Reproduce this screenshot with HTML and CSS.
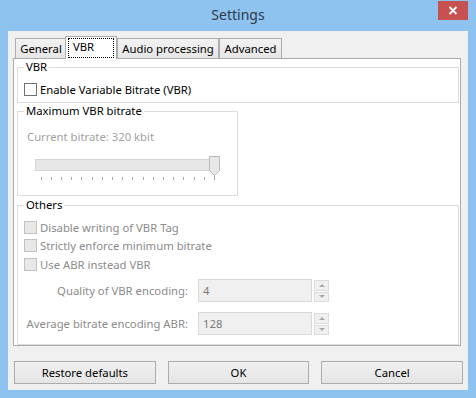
FILE: index.html
```html
<!DOCTYPE html>
<html>
<head>
<meta charset="utf-8">
<link rel="stylesheet" href="styles.css">
</head>
<body>
<div class="window">
  <div class="titlebar">
    <span class="title">Settings</span>
    <div class="close">
      <svg width="10" height="9" viewBox="0 0 10 9"><path d="M1.5 1 L8.5 8 M8.5 1 L1.5 8" stroke="#fff" stroke-width="1.8" fill="none"/></svg>
    </div>
  </div>
  <div class="client">
    <div class="tabs">
      <div class="tab t-general">General</div>
      <div class="tab selected"><span class="focus">VBR</span></div>
      <div class="tab t-audio">Audio processing</div>
      <div class="tab t-advanced">Advanced</div>
    </div>
    <div class="panel">
      <fieldset class="group g-vbr">
        <legend>VBR</legend>
        <div class="check"><span class="box"></span><span>Enable Variable Bitrate (VBR)</span></div>
      </fieldset>
      <fieldset class="group g-max">
        <legend>Maximum VBR bitrate</legend>
        <div class="current">Current bitrate: 320 kbit</div>
        <svg class="slider" width="190" height="26" viewBox="0 0 190 26">
          <rect x="1.5" y="3.5" width="183" height="11" fill="#e7e7e7" stroke="#d4d4d4"/>
          <g stroke="#a8a8a8" stroke-width="1">
            <path d="M7.5 21v3M17.5 21v3M27.5 21v3M37.5 21v3M47.5 21v3M58.5 21v3M68.5 21v3M78.5 21v3M88.5 21v3M98.5 21v3M109.5 21v3M119.5 21v3M129.5 21v3M139.5 21v3M149.5 21v3M160.5 21v3M170.5 21v3M180.5 17v7"/>
          </g>
          <path d="M175.5 0.5 H185.5 V14.5 L180.5 19.5 L175.5 14.5 Z" fill="#e8e8e8" stroke="#b9b9b9"/>
        </svg>
      </fieldset>
      <fieldset class="group g-others">
        <legend>Others</legend>
        <div class="check dis"><span class="box"></span><span>Disable writing of VBR Tag</span></div>
        <div class="check dis"><span class="box"></span><span>Strictly enforce minimum bitrate</span></div>
        <div class="check dis"><span class="box"></span><span>Use ABR instead VBR</span></div>
        <div class="fields">
          <div class="flabel">Quality of VBR encoding:</div>
          <div class="input">4</div>
          <div class="spin"><span class="up"></span><span class="down"></span></div>
          <div class="flabel">Average bitrate encoding ABR:</div>
          <div class="input">128</div>
          <div class="spin"><span class="up"></span><span class="down"></span></div>
        </div>
      </fieldset>
    </div>
    <div class="buttons">
      <div class="btn">Restore defaults</div>
      <div class="btn">OK</div>
      <div class="btn">Cancel</div>
    </div>
  </div>
</div>
</body>
</html>
```
FILE: styles.css
```css
* { box-sizing: border-box; }
html, body { margin: 0; padding: 0; }
body {
  width: 476px;
  height: 398px;
  overflow: hidden;
  background: #8ec2ef;
  font-family: "Noto Sans", "Open Sans", sans-serif;
  font-size: 11.3px;
  color: #000;
}
.window {
  height: 398px;
  display: flex;
  flex-direction: column;
  padding: 0 8px 8px;
}
.titlebar {
  height: 31px;
  display: grid;
  grid-template-columns: 1fr auto 1fr;
  align-items: start;
}
.title {
  grid-column: 2;
  font-size: 14px;
  line-height: 30px;
  color: #2d3b4d;
}
.close {
  grid-column: 3;
  justify-self: end;
  width: 30px;
  height: 19px;
  margin-top: 1px;
  background: #c75050;
  display: flex;
  align-items: center;
  justify-content: center;
}
.close svg { display: block; }
.client {
  height: 359px;
  background: #f0f0f0;
  display: flex;
  flex-direction: column;
  padding: 5px 7px 6px 5px;
}
.tabs {
  height: 22px;
  display: flex;
  align-items: flex-end;
  padding-left: 2px;
  position: relative;
  z-index: 1;
}
.tab {
  height: 20px;
  border: 1px solid #acacac;
  border-bottom: none;
  background: linear-gradient(#f2f2f2, #e6e6e6);
  text-align: center;
  line-height: 19px;
  white-space: nowrap;
}
.t-general { width: 52px; }
.t-audio { width: 102px; }
.t-advanced { width: 63px; }
.tab.selected {
  width: 52px;
  height: 23px;
  margin: 0 0 -1px -2px;
  background: #fff;
  padding: 1px 2px 1px 2px;
  text-align: left;
}
.focus {
  display: block;
  height: 20px;
  border: 1px dotted #000;
  padding-left: 4px;
  line-height: 16px;
}
.panel {
  height: 288px;
  background: #fff;
  border: 1px solid #acacac;
  display: flex;
  flex-direction: column;
}
.group {
  margin: 0 1px 0 3px;
  padding: 0;
  border: 1px solid #dcdcdc;
  min-width: 0;
}
.group legend {
  margin-left: 6px;
  padding: 0 2px;
  line-height: 16px;
}
.g-vbr { height: 44px; }
.g-max { width: 221px; height: 93px; }
.g-others { height: 148px; margin-top: 1px; }
.check {
  display: flex;
  align-items: center;
  height: 18.5px;
  padding-left: 6px;
  gap: 3px;
}
.g-vbr .check { margin-top: 5px; height: 18px; }
.g-others .check:first-of-type { margin-top: 5px; }
.box {
  width: 13px;
  height: 13px;
  border: 1px solid #707070;
  background: #fff;
  flex: none;
}
.check.dis { color: #8b8b8b; }
.check.dis .box { border-color: #c2c2c2; background: #e8e8e8; }
.current {
  margin: 10px 0 0 9px;
  line-height: 16px;
  color: #a2a2a2;
}
.slider {
  display: block;
  margin: 11px 0 0 16px;
}
.fields {
  display: grid;
  grid-template-columns: 170px 114px 15px;
  column-gap: 10px;
  row-gap: 10px;
  margin-top: 5.5px;
  align-items: center;
}
.fields .spin { margin-left: -8px; }
.flabel {
  text-align: right;
  color: #8b8b8b;
  white-space: nowrap;
}
.input {
  height: 23px;
  border: 1px solid #d9d9d9;
  background: #f0f0f0;
  color: #7a7a7a;
  padding-left: 4px;
  line-height: 21px;
}
.spin {
  width: 15px;
  height: 23px;
  display: flex;
  flex-direction: column;
  gap: 1px;
  padding-top: 1px;
}
.spin span {
  height: 11px;
  border: 1px solid #dcdcdc;
  background: #f0f0f0;
  position: relative;
  display: flex;
  align-items: center;
  justify-content: center;
}
.spin span::after {
  content: "";
  width: 0;
  height: 0;
  border-left: 3px solid transparent;
  border-right: 3px solid transparent;
}
.spin .up::after { border-bottom: 3px solid #a8a8a8; }
.spin .down::after { border-top: 3px solid #a8a8a8; }
.buttons {
  margin: 15px -2px 0 1px;
  display: grid;
  grid-template-columns: 1fr 1fr 1fr;
  column-gap: 12px;
}
.btn {
  height: 23px;
  border: 1px solid #acacac;
  background: linear-gradient(#f0f0f0, #e5e5e5);
  text-align: center;
  line-height: 21px;
}
```
